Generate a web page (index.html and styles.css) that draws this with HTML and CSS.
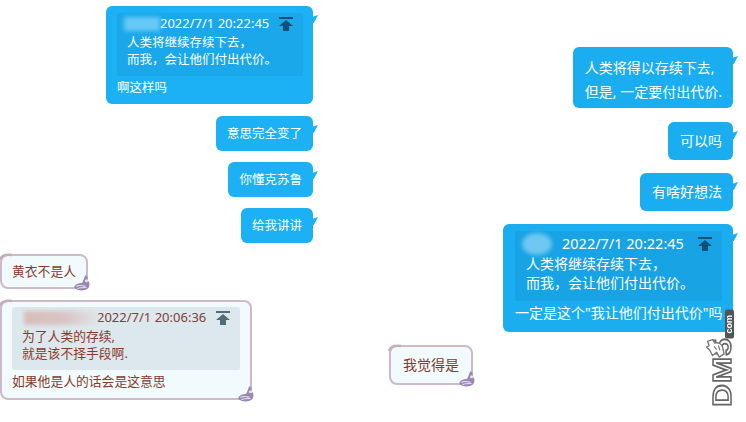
FILE: index.html
```html
<!DOCTYPE html>
<html lang="zh-CN">
<head>
  <meta charset="UTF-8">
  <title>Chat</title>
  <link rel="stylesheet" href="styles.css">
</head>
<body>
  <svg class="defs" width="0" height="0">
    <symbol id="pin" viewBox="0 0 14 14">
      <rect x="0" y="0" width="14" height="2"/>
      <path d="M7 3 L14 9 L10 9 L10 14 L4 14 L4 9 L0 9 Z"/>
    </symbol>
    <symbol id="paw" viewBox="0 0 16 16">
      <path d="M1 12 C2 9 5 8 8 8 C9 6 10 3 11 1 C13 1 13 4 13 6 C15 7 15 10 14 12 C12 15 4 16 1 12 Z" fill="#9a88b4"/>
      <path d="M3 11 C5 10 8 10 11 11 M4 13 C6 12 9 12 12 12" stroke="#e8dff0" fill="none"/>
      <circle cx="12" cy="6" r="1.4" fill="#e8dff0"/>
    </symbol>
    <symbol id="curl" viewBox="0 0 14 8">
      <path d="M1 7 C2 3 6 1 13 2" stroke="#c4adbd" stroke-width="2.4" fill="none"/>
    </symbol>
  </svg>

  <main class="chat">
    <section class="pane pane-left">
      <div class="msg sent">
        <div class="quote">
          <div class="quote-head">
            <span class="blur-name blur-blue"></span>
            <span class="quote-date">2022/7/1 20:22:45</span>
            <svg class="pin"><use href="#pin"/></svg>
          </div>
          <p>人类将继续存续下去，<br>而我，会让他们付出代价。</p>
        </div>
        <p class="after-quote">啊这样吗</p>
      </div>
      <div class="msg sent">意思完全变了</div>
      <div class="msg sent">你懂克苏鲁</div>
      <div class="msg sent">给我讲讲</div>
      <div class="msg received">
        黄衣不是人
        <svg class="curl"><use href="#curl"/></svg>
        <svg class="paw"><use href="#paw"/></svg>
      </div>
      <div class="msg received has-quote">
        <div class="quote">
          <div class="quote-head">
            <span class="blur-name blur-pink"></span>
            <span class="quote-date">2022/7/1 20:06:36</span>
            <svg class="pin"><use href="#pin"/></svg>
          </div>
          <p>为了人类的存续,<br>就是该不择手段啊.</p>
        </div>
        <p class="after-quote">如果他是人的话会是这意思</p>
        <svg class="curl"><use href="#curl"/></svg>
        <svg class="paw"><use href="#paw"/></svg>
      </div>
    </section>

    <section class="pane pane-right">
      <div class="msg sent two-line">人类将得以存续下去,<br>但是, 一定要付出代价.</div>
      <div class="msg sent">可以吗</div>
      <div class="msg sent">有啥好想法</div>
      <div class="msg sent">
        <div class="quote">
          <div class="quote-head">
            <span class="blur-name blur-round"></span>
            <span class="quote-date">2022/7/1 20:22:45</span>
            <svg class="pin"><use href="#pin"/></svg>
          </div>
          <p>人类将继续存续下去，<br>而我，会让他们付出代价。</p>
        </div>
        <p class="after-quote">一定是这个"我让他们付出代价"吗</p>
      </div>
      <div class="msg received">
        我觉得是
        <svg class="curl"><use href="#curl"/></svg>
        <svg class="paw"><use href="#paw"/></svg>
      </div>
    </section>
  </main>

  <div class="watermark">
    <span class="wm-logo">DM5</span>
    <svg class="wm-cat" viewBox="0 0 24 26">
      <path d="M3 5 L9 3 L12 7 C16 6 20 8 21 12 L23 20 L17 24 L14 18 L9 22 L6 16 L2 12 L5 10 Z" fill="#fff" stroke="#777" stroke-width="1.6" stroke-linejoin="round"/>
      <path d="M11 11 L14 15 M16 10 L18 16" stroke="#777" stroke-width="1.4" fill="none"/>
    </svg>
    <span class="wm-com">com</span>
  </div>
</body>
</html>
```

FILE: styles.css
```css
html, body {
  margin: 0;
  background: #fff;
}

body {
  position: relative;
  width: 746px;
  height: 422px;
  overflow: hidden;
  font-family: "Noto Sans", "Noto Sans CJK SC", sans-serif;
}

.defs {
  position: absolute;
}

p {
  margin: 0;
}

.chat {
  display: flex;
}

.pane {
  display: flex;
  flex-direction: column;
  align-items: flex-start;
}

/* Left window is scaled a little smaller than the right one */
.pane-left {
  width: 318px;
  padding-top: 6px;
  gap: 11px;
  font-size: 12.8px;
  line-height: 19px;
}

.pane-right {
  flex: 1;
  margin-left: 71px;
  padding-top: 47px;
  gap: 13px;
  font-size: 14px;
  line-height: 20px;
}

.msg {
  position: relative;
  box-sizing: border-box;
}

/* Sent bubbles */
.sent {
  align-self: flex-end;
  background: #1cb1f5;
  color: #fff;
  border-radius: 6px;
}

.sent::after {
  content: "";
  position: absolute;
  top: 9px;
  right: -5px;
  width: 6px;
  height: 8px;
  background: #1cb1f5;
  clip-path: polygon(100% 0, 30% 100%, 0 100%, 0 25%);
}

.pane-left .sent {
  margin-right: 5px;
  padding: 8px 11px;
  font-size: 12.5px;
}

.pane-right .sent {
  margin-right: 13px;
  padding: 9px 11px 9px 12px;
  background: #1aaef0;
}

.pane-right .sent::after {
  background: #1aaef0;
}

.pane-right .two-line {
  margin-bottom: 1px;
  padding: 9px 11px 4px 12px;
  line-height: 24px;
}

/* Received bubbles */
.received {
  background: #f1fbfe;
  color: #8a3a28;
  border: 2px solid #cdb9c9;
  border-radius: 8px;
}

.pane-left .received {
  padding: 6px 10px;
}

.pane-right .received {
  padding: 8px 12px;
}

.curl {
  position: absolute;
  top: -3px;
  left: -3px;
  width: 14px;
  height: 8px;
}

.paw {
  position: absolute;
  right: -5px;
  bottom: -5px;
  width: 18px;
  height: 18px;
}

/* Quoted reply block */
.pane-left .sent:first-child {
  width: 207px;
  margin-bottom: 1px;
  padding: 7px 10px 7px 11px;
}

.pane-right .sent:nth-child(4) {
  width: 230px;
  padding: 7px 11px 9px 12px;
}

.has-quote.received {
  width: 252px;
  padding: 5px 10px 7px;
}

.quote {
  box-sizing: border-box;
  padding: 0 10px 0 7px;
  border-radius: 2px;
  background: #1aa8ea;
}

.pane-left .quote {
  height: 63px;
}

.pane-right .quote {
  height: 70px;
  padding-top: 2px;
  background: #18a3e4;
}

.received .quote {
  background: #dde8ee;
  padding-left: 10px;
}

.quote p {
  padding-left: 3px;
  line-height: 17px;
}

.pane-right .quote p {
  line-height: 19px;
  padding-left: 4px;
}

.received .quote p {
  padding-left: 0;
}

.quote-head {
  display: flex;
  align-items: center;
  height: 21px;
  line-height: 21px;
}

.quote-date {
  font-size: 13px;
  white-space: nowrap;
}

.pane-right .quote-date {
  font-size: 14.5px;
}

.received .quote-date {
  color: #7d4034;
}

.blur-name {
  flex: none;
  height: 14px;
  filter: blur(2px);
}

.blur-blue {
  width: 36px;
  background: #66c9f4;
}

.blur-round {
  width: 30px;
  height: 22px;
  margin-right: 10px;
  border-radius: 50%;
  background: #6ec8f2;
}

.blur-pink {
  width: 73px;
  margin-left: 2px;
  background: linear-gradient(90deg, #d9bcb8, #d8c4c4 55%, #dfe3e6);
}

.pin {
  flex: none;
  width: 14px;
  height: 14px;
  margin-left: auto;
  fill: #0f4f78;
}

.received .pin {
  fill: #506e78;
}

.after-quote {
  margin-top: 2px;
  white-space: nowrap;
}

/* Site watermark, sits over the page corner */
.watermark {
  position: absolute;
  left: 704px;
  top: 310px;
  width: 32px;
  height: 98px;
  font-family: "Liberation Sans", sans-serif;
  font-weight: bold;
}

.wm-logo {
  position: absolute;
  top: 33px;
  right: 4px;
  writing-mode: vertical-rl;
  transform: rotate(180deg) scaleY(1.2);
  font-size: 26px;
  line-height: 20px;
  letter-spacing: 1px;
  color: #fff;
  -webkit-text-stroke: 1.5px #666;
}

.wm-cat {
  position: absolute;
  left: 1px;
  top: 25px;
  width: 20px;
  height: 26px;
}

.wm-com {
  position: absolute;
  top: 0;
  right: 2px;
  padding: 5px 1px;
  border-radius: 2px;
  writing-mode: vertical-rl;
  transform: rotate(180deg);
  background: #555;
  color: #fff;
  font-size: 9px;
  line-height: 7px;
}
```
